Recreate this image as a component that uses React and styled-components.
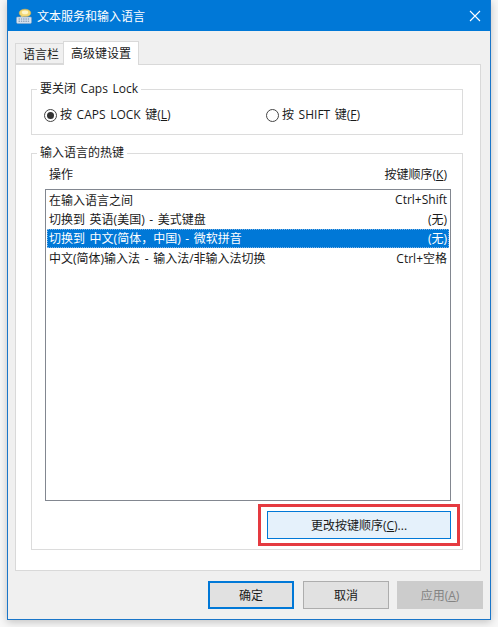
import React from "react";
import styled, { createGlobalStyle } from "styled-components";

const Global = createGlobalStyle`
  html, body { margin: 0; padding: 0; background: #f7f7f7; }
  body { font-family: "Open Sans", "Noto Sans CJK SC", sans-serif; font-size: 12px; color: #1a1a1a; word-spacing: 1.5px; }
`;
const Page = styled.div`
  width: 498px; height: 627px; box-sizing: border-box; padding: 0 7px; overflow: hidden;
`;
const Win = styled.div`
  width: 484px; height: 620px; box-sizing: border-box; background: #f0f0f0;
  border: 1px solid #1a76c9; border-top: 0; display: flex; flex-direction: column;
  box-shadow: 0 2px 8px rgba(0,0,0,.22);
`;
const TitleBar = styled.div`
  height: 31px; flex: none; background: #0078d7; color: #fff; display: flex; align-items: center;
  padding: 0 9px 0 8px; gap: 5px; font-size: 12px;
`;
const TitleText = styled.span` flex: 1; `;
const Body = styled.div`
  flex: 1; display: flex; flex-direction: column; padding: 9px 7px 0 7px; min-height: 0;
`;
const Tabs = styled.div` height: 24px; flex: none; display: flex; align-items: flex-end; position: relative; z-index: 1; `;
const Tab = styled.div`
  box-sizing: border-box; display: flex; align-items: center; justify-content: center;
  border: 1px solid #d9d9d9; background: ${p => p.$active ? "#fff" : "#f0f0f0"};
  height: ${p => p.$active ? 24 : 21}px; width: ${p => p.$active ? 76 : 48}px;
  margin-bottom: ${p => p.$active ? -1 : 0}px; border-bottom: ${p => p.$active ? "0" : "1px solid #d9d9d9"};
  padding: ${p => p.$active ? "0 0 2px" : "0 0 0 3px"};
  border-right: ${p => p.$active ? "1px solid #d9d9d9" : "0"};
`;
const Panel = styled.div`
  box-sizing: border-box; width: 466px; height: 507px; flex: none; background: #fff; border: 1px solid #d9d9d9;
  padding: 17px 16px 20px 15px; display: flex; flex-direction: column; gap: 11px;
`;
const Group = styled.fieldset`
  margin: 0; min-width: 0; box-sizing: border-box; border: 1px solid #dcdcdc; border-radius: 0;
  padding: 0; display: flex; flex-direction: column; width: 432px;
  height: ${p => p.$h}px; flex: none; position: relative;
`;
const Legend = styled.legend`
  margin-left: 5px; padding: 0 3px; font-size: 12px; line-height: 14px; height: 14px;
`;
const RadioRow = styled.div` display: flex; padding: 11px 0 0 12px; `;
const RadioLabel = styled.label`
  display: flex; align-items: center; gap: 3px; line-height: 16px; width: ${p => p.$w}px; font-size: 12px;
`;
const Radio = styled.span`
  box-sizing: border-box; width: 13px; height: 13px; border-radius: 50%; border: 1px solid #444;
  display: flex; align-items: center; justify-content: center; flex: none;
  &::after { content: ""; width: 7px; height: 7px; border-radius: 50%; background: ${p => p.$on ? "#333" : "transparent"}; }
`;
const U = styled.span` text-decoration: underline; text-underline-offset: 1px; `;
const HeadRow = styled.div`
  display: flex; justify-content: space-between; padding: 7px 15px 0 17px; line-height: 16px;
`;
const List = styled.div`
  box-sizing: border-box; margin: 6px 11px 0 13px; height: 312px; border: 1px solid #828790; padding: 0 1px;
  display: flex; flex-direction: column;
`;
const Row = styled.div`
  height: 19.3px; flex: none; display: flex; justify-content: space-between; align-items: center; padding: 0 2px;
  background: ${p => p.$sel ? "#0078d7" : "transparent"}; color: ${p => p.$sel ? "#fff" : "#1a1a1a"};
  outline: ${p => p.$sel ? "1px dotted #7fb4e6" : "0"}; outline-offset: -1px;
`;
const Mark = styled.div`
  box-sizing: border-box; align-self: flex-end; margin: 3px 2px 0 0; border: 3px solid #e53a40;
  padding: 4px 6px; width: 202px; height: 42px;
`;
const ChangeBtn = styled.button`
  box-sizing: border-box; width: 184px; height: 28px; background: #e5f1fb; border: 1px solid #0078d7;
  font: inherit; word-spacing: inherit; color: #1a1a1a; padding: 0; display: block;
`;
const Footer = styled.div`
  flex: 1; display: flex; justify-content: flex-end; align-items: flex-start; gap: 9px; padding: 10px 0 0;
`;
const Btn = styled.button`
  box-sizing: border-box; width: 86px; height: 28px; font: inherit; padding: 0;
  margin-left: ${p => p.$off ? -1 : 0}px;
  background: ${p => p.$off ? "#cccccc" : "#e1e1e1"}; color: ${p => p.$off ? "#838383" : "#1a1a1a"};
  border: ${p => p.$def ? "2px solid #0078d7" : p.$off ? "1px solid #cccccc" : "1px solid #adadad"};
`;
const CloseIcon = () => (
  <svg width="12" height="12" viewBox="0 0 12 12">
    <path d="M1 1 L11 11 M11 1 L1 11" stroke="#fff" strokeWidth="1.1" fill="none" />
  </svg>
);
const AppIcon = () => (
  <svg width="16" height="16" viewBox="0 0 16 16">
    <ellipse cx="9" cy="5" rx="5.8" ry="3.8" fill="#f3d873" stroke="#d9ae4a" strokeWidth=".6" />
    <ellipse cx="9" cy="4.4" rx="3.2" ry="1.8" fill="#fdf4c8" />
    <path d="M5 8 L4 10.5 L8 8.5Z" fill="#f3d873" />
    <rect x="0.6" y="9" width="14.8" height="6.4" rx=".8" fill="#dbe6f2" stroke="#8fa6bf" strokeWidth=".6" />
    <path d="M2.5 11h11M2.5 13.2h11" stroke="#6f8aa6" strokeWidth="1" strokeDasharray="1.5 .8" />
  </svg>
);
const rows = [
  ["在输入语言之间", "Ctrl+Shift"],
  ["切换到 英语(美国) - 美式键盘", "(无)"],
  ["切换到 中文(简体，中国) - 微软拼音", "(无)", true],
  ["中文(简体)输入法 - 输入法/非输入法切换", "Ctrl+空格"],
];
export default function App() {
  return (
    <Page>
      <Global />
      <Win>
        <TitleBar>
          <AppIcon />
          <TitleText>文本服务和输入语言</TitleText>
          <CloseIcon />
        </TitleBar>
        <Body>
          <Tabs>
            <Tab>语言栏</Tab>
            <Tab $active>高级键设置</Tab>
          </Tabs>
          <Panel>
            <Group $h={53}>
              <Legend>要关闭 Caps Lock</Legend>
              <RadioRow>
                <RadioLabel $w={222}><Radio $on /><span>按 CAPS LOCK 键(<U>L</U>)</span></RadioLabel>
                <RadioLabel><Radio /><span>按 SHIFT 键(<U>F</U>)</span></RadioLabel>
              </RadioRow>
            </Group>
            <Group $h={404}>
              <Legend>输入语言的热键</Legend>
              <HeadRow>
                <span>操作</span>
                <span>按键顺序(<U>K</U>)</span>
              </HeadRow>
              <List>
                {rows.map(([a, b, s]) => (
                  <Row key={a} $sel={s}><span>{a}</span><span>{b}</span></Row>
                ))}
              </List>
              <Mark>
                <ChangeBtn>更改按键顺序(<U>C</U>)...</ChangeBtn>
              </Mark>
            </Group>
          </Panel>
          <Footer>
            <Btn $def>确定</Btn>
            <Btn>取消</Btn>
            <Btn $off>应用(<U>A</U>)</Btn>
          </Footer>
        </Body>
      </Win>
    </Page>
  );
}
